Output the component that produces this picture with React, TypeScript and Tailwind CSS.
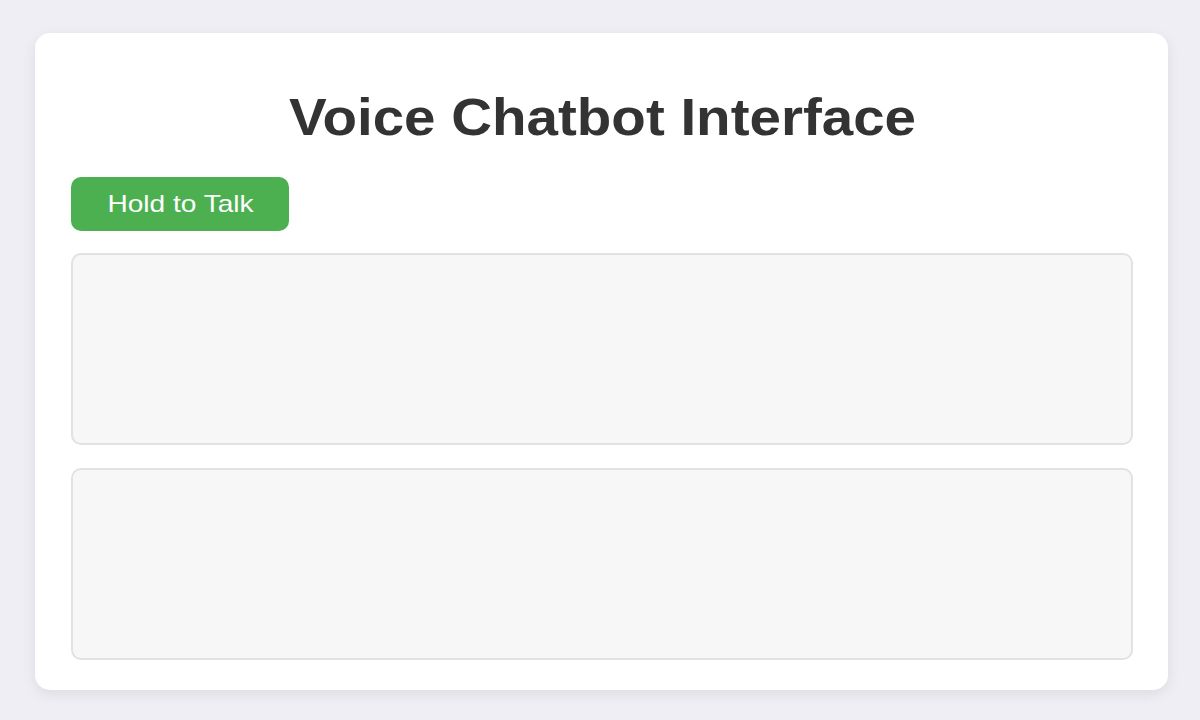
export default function App() {
  return (
    <div className="min-h-[720px] bg-[#efeef4] pl-[35px] pr-[32px] pt-[33px] pb-[31px] font-['Liberation_Sans',Arial,sans-serif]">
      <div className="rounded-[15px] bg-white pl-[36px] pr-[35px] pt-[54px] pb-[30px] shadow-[0_4px_14px_rgba(0,0,0,0.08)]">
        <h1 className="h-[60px] text-center text-[52px] font-bold leading-[60px] text-[#333333]">
          <span className="inline-block scale-x-[1.087]">Voice Chatbot Interface</span>
        </h1>
        <button
          type="button"
          className="mt-[30px] flex h-[54px] w-[218px] items-center justify-center rounded-[10px] bg-[#4caf50] text-[24px] text-white"
        >
          <span className="inline-block scale-x-[1.17]">Hold to Talk</span>
        </button>
        <div className="mt-[22px] h-[192px] rounded-[10px] border-2 border-[#e2e2e2] bg-[#f7f7f7]" />
        <div className="mt-[23px] h-[192px] rounded-[10px] border-2 border-[#e2e2e2] bg-[#f7f7f7]" />
      </div>
    </div>
  );
}
